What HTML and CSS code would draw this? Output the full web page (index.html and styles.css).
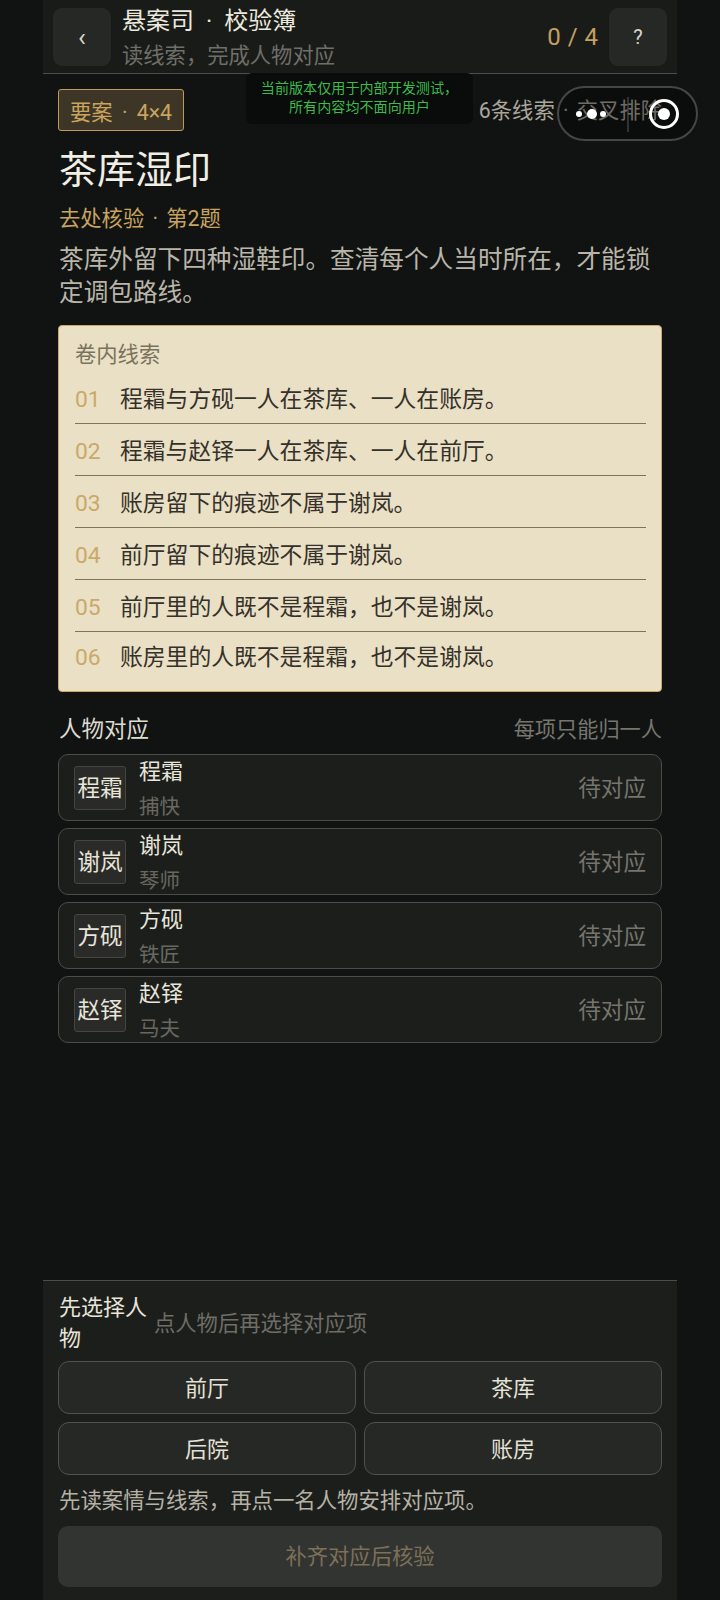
FILE: index.html
```html
<!DOCTYPE html>
<html lang="zh-CN">
<head>
<meta charset="utf-8">
<title>悬案司 · 校验簿</title>
<link rel="stylesheet" href="styles.css">
</head>
<body>
<div class="app">
  <header class="top">
    <button class="square back">‹</button>
    <div class="top-text">
      <div class="top-title">悬案司 · 校验簿</div>
      <div class="top-sub">读线索，完成人物对应</div>
    </div>
    <div class="score">0 / 4</div>
    <button class="square help">?</button>
  </header>

  <main class="main">
    <div class="meta">
      <span class="badge">要案 · 4×4</span>
      <span class="meta-right">6条线索 · 交叉排除</span>
    </div>
    <h1 class="title">茶库湿印</h1>
    <div class="kicker">去处核验 · 第2题</div>
    <p class="desc">茶库外留下四种湿鞋印。查清每个人当时所在，才能锁定调包路线。</p>

    <section class="clues">
      <div class="clues-head">卷内线索</div>
      <div class="clue"><span class="num">01</span><span>程霜与方砚一人在茶库、一人在账房。</span></div>
      <div class="clue"><span class="num">02</span><span>程霜与赵铎一人在茶库、一人在前厅。</span></div>
      <div class="clue"><span class="num">03</span><span>账房留下的痕迹不属于谢岚。</span></div>
      <div class="clue"><span class="num">04</span><span>前厅留下的痕迹不属于谢岚。</span></div>
      <div class="clue"><span class="num">05</span><span>前厅里的人既不是程霜，也不是谢岚。</span></div>
      <div class="clue"><span class="num">06</span><span>账房里的人既不是程霜，也不是谢岚。</span></div>
    </section>

    <div class="sec-head"><span class="sec-title">人物对应</span><span class="sec-note">每项只能归一人</span></div>
    <div class="people">
      <div class="person"><div class="avatar">程霜</div><div class="who"><div class="name">程霜</div><div class="role">捕快</div></div><div class="state">待对应</div></div>
      <div class="person"><div class="avatar">谢岚</div><div class="who"><div class="name">谢岚</div><div class="role">琴师</div></div><div class="state">待对应</div></div>
      <div class="person"><div class="avatar">方砚</div><div class="who"><div class="name">方砚</div><div class="role">铁匠</div></div><div class="state">待对应</div></div>
      <div class="person"><div class="avatar">赵铎</div><div class="who"><div class="name">赵铎</div><div class="role">马夫</div></div><div class="state">待对应</div></div>
    </div>
  </main>

  <footer class="dock">
    <div class="dock-head"><div class="dock-title">先选择人物</div><div class="dock-note">点人物后再选择对应项</div></div>
    <div class="options">
      <button class="option">前厅</button>
      <button class="option">茶库</button>
      <button class="option">后院</button>
      <button class="option">账房</button>
    </div>
    <div class="hint">先读案情与线索，再点一名人物安排对应项。</div>
    <button class="cta">补齐对应后核验</button>
  </footer>
</div>

<div class="dev-tip">当前版本仅用于内部开发测试，<br>所有内容均不面向用户</div>
<div class="capsule">
  <svg class="capsule-svg" viewBox="0 0 141 55" width="141" height="55" aria-hidden="true">
    <circle cx="22" cy="28" r="3" fill="#fff"/>
    <circle cx="35" cy="28" r="5" fill="#fff"/>
    <circle cx="46" cy="28" r="3" fill="#fff"/>
    <rect x="70.5" y="11" width="1" height="35" fill="#5a5a5a"/>
    <circle cx="107" cy="28" r="13.5" fill="none" stroke="#fff" stroke-width="3"/>
    <circle cx="107" cy="28" r="6" fill="#fff"/>
  </svg>
</div>
</body>
</html>
```
FILE: styles.css
```css
* { box-sizing: border-box; }
html, body { margin: 0; padding: 0; }
body {
  width: 720px;
  height: 1600px;
  background: #111313;
  font-family: Roboto, "Noto Sans CJK SC", "Noto Sans", sans-serif;
  position: relative;
  overflow: hidden;
}
button { font-family: inherit; padding: 0; }
.app {
  width: 634px;
  height: 1600px;
  margin: 0 auto;
  display: flex;
  flex-direction: column;
}
.top {
  height: 74px;
  flex: none;
  background: #191b19;
  border-bottom: 1px solid #4d4e49;
  padding: 8px 10px 0;
  display: flex;
  align-items: flex-start;
}
.square {
  width: 58px;
  height: 58px;
  border: 0;
  border-radius: 9px;
  background: #262825;
  color: #d8d5c9;
  font-size: 20px;
  flex: none;
}
.back { font-size: 26px; }
.top-text { margin-left: 11px; flex: 1; margin-top: -4px; }
.top-title { color: #ece9de; font-size: 24px; line-height: 34px; word-spacing: 6px; }
.top-sub { color: #6f6f68; font-size: 21.3px; line-height: 30px; margin-top: 3px; }
.score { color: #c4a160; font-size: 24px; line-height: 58px; margin-right: 11px; word-spacing: 1px; }

.main { flex: 1; padding: 15px 15px 0 15px; }
.meta { display: flex; justify-content: space-between; align-items: center; height: 42px; }
.badge {
  display: flex;
  align-items: center;
  height: 42px;
  padding: 0 11px;
  color: #c9a45e;
  background: #3d3526;
  border: 1px solid #bd9c5a;
  border-radius: 3px;
  font-size: 21.3px;
  word-spacing: 4px;
}
.meta-right { color: #a9a69a; font-size: 21.3px; word-spacing: 3px; margin-top: -3px; }
.title {
  margin: 13px 0 0 1px;
  color: #f1eee4;
  font-size: 38px;
  font-weight: 400;
  line-height: 52px;
}
.kicker { margin: 8px 0 0 1px; color: #c9a45e; font-size: 21.3px; line-height: 30px; word-spacing: 3px; }
.desc {
  margin: 9px 0 0 1px;
  color: #b9b6a9;
  font-size: 24.65px;
  line-height: 33px;
}
.clues {
  margin-top: 16px;
  height: 367px;
  background: #eae0c5;
  border: 1px solid #c9a96a;
  border-radius: 4px;
  padding: 13px 15px 0 16px;
}
.clues-head { color: #7b725d; font-size: 21.3px; line-height: 32px; }
.clue {
  display: flex;
  align-items: center;
  height: 52px;
  padding-bottom: 1px;
  color: #35312a;
  font-size: 22.8px;
  border-bottom: 1px solid #7f7359;
}
.clue:nth-of-type(2) { margin-top: 1px; }
.clue:last-child { border-bottom: 0; height: 47px; padding-bottom: 0; }
.num { width: 45px; color: #c9a96a; flex: none; margin-top: 4px; }

.sec-head {
  margin-top: 19px;
  display: flex;
  justify-content: space-between;
  align-items: center;
  height: 32px;
}
.sec-title { color: #dedbd0; font-size: 22.5px; margin-left: 1px; }
.sec-note { color: #77766e; font-size: 21.2px; }
.people { margin-top: 11px; display: flex; flex-direction: column; gap: 7px; }
.person {
  height: 67px;
  display: flex;
  align-items: center;
  padding: 0 15px 0 15px;
  background: #1c1e1c;
  border: 1px solid #4b4c47;
  border-radius: 10px;
}
.avatar {
  width: 52px;
  height: 44px;
  background: #2a2b28;
  border: 1px solid #44453f;
  border-radius: 3px;
  color: #e8e5da;
  font-size: 22.6px;
  display: flex;
  align-items: center;
  justify-content: center;
  flex: none;
  padding-bottom: 2px;
}
.who { margin-left: 13px; flex: 1; margin-top: 5px; }
.name { color: #e8e5da; font-size: 22px; line-height: 34px; }
.role { color: #686860; font-size: 20.5px; line-height: 36px; }
.state { color: #75756e; font-size: 22.6px; margin-top: -3px; }

.dock {
  flex: none;
  height: 320px;
  background: #1c1e1c;
  border-top: 1px solid #4b4c47;
  padding: 11px 15px 0 15px;
}
.dock-head { display: flex; align-items: center; gap: 4px; }
.dock-title { width: 91px; margin-left: 1px; color: #e8e5da; font-size: 22px; line-height: 31px; flex: none; }
.dock-note { color: #6e6e66; font-size: 21.3px; margin-top: -4px; }
.options { margin-top: 7px; display: grid; grid-template-columns: 1fr 1fr; gap: 8px; }
.option {
  height: 53px;
  background: #262825;
  border: 1px solid #51524c;
  border-radius: 11px;
  color: #e4e1d6;
  font-size: 22px;
  padding-bottom: 4px;
}
.hint { margin: 11px 0 0 1px; color: #b5b2a5; font-size: 21.4px; line-height: 30px; }
.cta {
  display: block;
  width: 100%;
  height: 61px;
  margin-top: 10px;
  border: 0;
  border-radius: 10px;
  background: #323432;
  color: #7d7058;
  font-size: 21.3px;
  padding-bottom: 5px;
}

.dev-tip {
  position: absolute;
  left: 246px;
  top: 73px;
  width: 227px;
  height: 51px;
  background: #0a0b0b;
  border-radius: 6px;
  color: #3cbb4c;
  font-size: 14.1px;
  line-height: 18.5px;
  text-align: center;
  padding-top: 6px;
}
.capsule {
  position: absolute;
  left: 557px;
  top: 86px;
  width: 141px;
  height: 55px;
  border: 2px solid #464646;
  border-radius: 28px;
  background: rgba(0, 0, 0, 0.35);
}
.capsule-svg { position: absolute; left: -2px; top: -2px; }
```
